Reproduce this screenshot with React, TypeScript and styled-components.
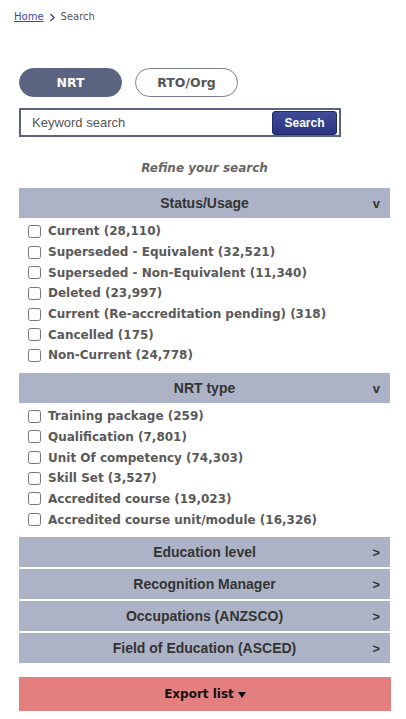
import React from "react";
import styled, { createGlobalStyle } from "styled-components";

const Global = createGlobalStyle`
  html, body { margin: 0; padding: 0; background: #fff; }
  body { font-family: "DejaVu Sans", Verdana, sans-serif; }
  * { box-sizing: border-box; }
`;

const Page = styled.div`
  width: 406px;
  display: flex;
  flex-direction: column;
`;

const Breadcrumb = styled.nav`
  padding: 10px 0 0 14px;
  font-size: 10px;
  line-height: 14px;
  color: #555;
  display: flex;
  align-items: center;
  gap: 5px;
`;

const CrumbLink = styled.a`
  color: #3848a8;
  text-decoration: underline;
`;

const Main = styled.div`
  padding: 0 16px 0 19px;
  display: flex;
  flex-direction: column;
`;

const PillRow = styled.div`
  display: flex;
  gap: 13px;
  margin-top: 44px;
`;

const Pill = styled.button<{ $active?: boolean }>`
  width: 103px;
  height: 29px;
  border-radius: 15px;
  font-family: "DejaVu Sans", Verdana, sans-serif;
  font-weight: bold;
  font-size: 12.5px;
  padding: 0;
  cursor: pointer;
  background: ${(p) => (p.$active ? "#5a6480" : "#fff")};
  color: ${(p) => (p.$active ? "#fff" : "#555")};
  border: 1px solid ${(p) => (p.$active ? "#5a6480" : "#7a7f8c")};
`;

const SearchBox = styled.div`
  margin-top: 11px;
  width: 322px;
  height: 29px;
  border: 2px solid #5a6480;
  display: flex;
  align-items: center;
  padding: 0 2px 0 11px;
`;

const KeywordInput = styled.input`
  flex: 1;
  border: none;
  outline: none;
  font-family: "Liberation Sans", Arial, sans-serif;
  font-size: 13px;
  color: #555;
  padding: 0;
  background: transparent;
  &::placeholder { color: #555; }
`;

const SearchButton = styled.button`
  width: 65px;
  height: 24px;
  border-radius: 3px;
  border: 1px solid #1f2a6a;
  background: linear-gradient(#404c98, #2a347e);
  color: #fff;
  font-family: "Liberation Sans", Arial, sans-serif;
  font-weight: bold;
  font-size: 12px;
  padding: 0;
`;

const Refine = styled.div`
  margin-top: 21px;
  height: 20px;
  line-height: 20px;
  text-align: center;
  font-weight: bold;
  font-style: italic;
  font-size: 12px;
  color: #666;
`;

const Facets = styled.div`
  margin-top: 10px;
  display: flex;
  flex-direction: column;
`;

const FacetHeader = styled.div<{ $gapBelow?: boolean }>`
  position: relative;
  height: 30px;
  background: #adb3c6;
  display: flex;
  align-items: center;
  justify-content: center;
  font-family: "Liberation Sans", Arial, sans-serif;
  font-weight: bold;
  font-size: 14px;
  color: #333;
  margin-bottom: ${(p) => (p.$gapBelow ? "2px" : "0")};
`;

const Indicator = styled.span`
  position: absolute;
  right: 10px;
  top: 50%;
  transform: translateY(-50%);
  font-size: 13px;
`;

const OptionList = styled.ul`
  list-style: none;
  margin: 0;
  padding: 3px 0 7px 5px;
`;

const Option = styled.li`
  height: 20.7px;
  display: flex;
  align-items: center;
`;

const Check = styled.input`
  margin: 0 7px 0 4px;
  width: 13px;
  height: 13px;
`;

const OptionLabel = styled.label`
  font-weight: bold;
  font-size: 12px;
  color: #595959;
`;

const ExportButton = styled.button`
  margin-top: 12px;
  width: 372px;
  height: 34px;
  background: #e37f7f;
  border: none;
  display: flex;
  align-items: center;
  justify-content: center;
  gap: 4px;
  font-family: "DejaVu Sans", Verdana, sans-serif;
  font-weight: bold;
  font-size: 12px;
  color: #111;
  padding: 0;
`;

const Caret = styled.span`
  width: 0;
  height: 0;
  border-left: 4.5px solid transparent;
  border-right: 4.5px solid transparent;
  border-top: 6px solid #111;
  margin-top: 2px;
`;

const status = [
  "Current (28,110)",
  "Superseded - Equivalent (32,521)",
  "Superseded - Non-Equivalent (11,340)",
  "Deleted (23,997)",
  "Current (Re-accreditation pending) (318)",
  "Cancelled (175)",
  "Non-Current (24,778)",
];

const nrtTypes = [
  "Training package (259)",
  "Qualification (7,801)",
  "Unit Of competency (74,303)",
  "Skill Set (3,527)",
  "Accredited course (19,023)",
  "Accredited course unit/module (16,326)",
];

const collapsed = [
  "Education level",
  "Recognition Manager",
  "Occupations (ANZSCO)",
  "Field of Education (ASCED)",
];

function OptionGroup({ items, prefix }: { items: string[]; prefix: string }) {
  return (
    <OptionList>
      {items.map((t, i) => (
        <Option key={t}>
          <Check type="checkbox" id={`${prefix}-${i}`} />
          <OptionLabel htmlFor={`${prefix}-${i}`}>{t}</OptionLabel>
        </Option>
      ))}
    </OptionList>
  );
}

export default function App() {
  return (
    <Page>
      <Global />
      <Breadcrumb>
        <CrumbLink href="#">Home</CrumbLink>
        <svg width="7" height="9" viewBox="0 0 7 9">
          <path d="M1.5 1 L5 4.5 L1.5 8" fill="none" stroke="#2a3580" strokeWidth="1.1" />
        </svg>
        <span>Search</span>
      </Breadcrumb>
      <Main>
        <PillRow>
          <Pill $active>NRT</Pill>
          <Pill>RTO/Org</Pill>
        </PillRow>
        <SearchBox>
          <KeywordInput placeholder="Keyword search" />
          <SearchButton>Search</SearchButton>
        </SearchBox>
        <Refine>Refine your search</Refine>
        <Facets>
          <FacetHeader>
            Status/Usage<Indicator>v</Indicator>
          </FacetHeader>
          <OptionGroup items={status} prefix="s" />
          <FacetHeader>
            NRT type<Indicator>v</Indicator>
          </FacetHeader>
          <OptionGroup items={nrtTypes} prefix="n" />
          {collapsed.map((c) => (
            <FacetHeader key={c} $gapBelow>
              {c}
              <Indicator>&gt;</Indicator>
            </FacetHeader>
          ))}
        </Facets>
        <ExportButton>
          Export list <Caret />
        </ExportButton>
      </Main>
    </Page>
  );
}
